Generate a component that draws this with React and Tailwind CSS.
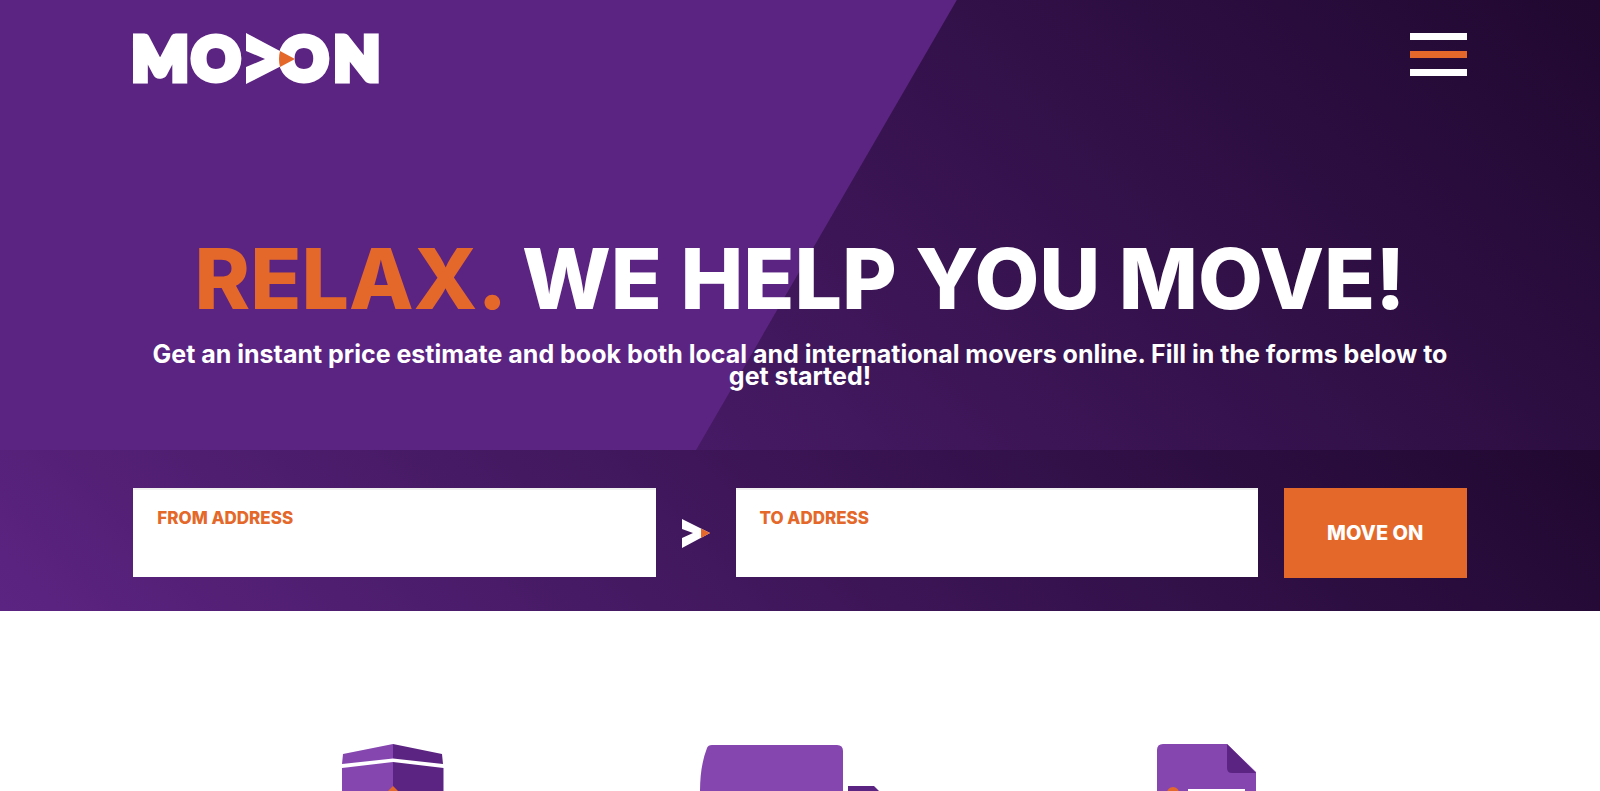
import { useState } from "react";

const Logo = () => (
  <svg
    className="-ml-1 h-[88px] w-[260px] font-['Lato',sans-serif] font-black"
    viewBox="-4 -17 260 88"
    role="img"
    aria-label="MoveOn"
  >
    <g fill="#fff" stroke="#fff" strokeWidth="7" strokeLinejoin="miter" fontSize="59">
      <text x="-1" y="47">M</text>
      <text x="59" y="47">O</text>
      <text x="147" y="47">O</text>
      <text x="201" y="47">N</text>
    </g>
    <path d="M113 0 L162 26 L113 51 V34 L132 26 L113 18 Z" fill="#fff" />
    <path d="M147 18 L162 26 L147 34 Q145 26 147 18 Z" fill="#e4682a" />
  </svg>
);

const Arrow = () => (
  <svg className="h-[29px] w-7 shrink-0 self-center" viewBox="0 0 28 29" aria-hidden="true">
    <path d="M0 0 L28 14 L0 29 V19 L11 14 L0 10 Z" fill="#fff" />
    <path d="M19 9.500 L28 14 L19 19 Z" fill="#e4682a" />
  </svg>
);

const BoxIcon = () => (
  <svg className="h-[47px] w-[102px]" viewBox="0 0 102 47" aria-hidden="true">
    <path d="M1 10 L51 0 V14.500 L0 20 Z M0 24 L51 18 V47 H0 Z" fill="#8546b0" />
    <path d="M51 0 L100 10 L101 20 L51 14.500 Z M51 18 L101.500 24 V47 H51 Z" fill="#5c2482" />
    <path d="M51 42 L56 47 H46 Z" fill="#e4682a" />
  </svg>
);

const TruckIcon = () => (
  <svg className="h-[47px] w-[200px]" viewBox="0 0 200 47" aria-hidden="true">
    <path d="M12 1 H137 Q143 1 143 7 V47 H0 Q0 22 7 4 Q8 1 12 1 Z" fill="#8546b0" />
    <path d="M148 42 H174 L179 47 H148 Z" fill="#5c2482" />
  </svg>
);

const DocumentIcon = () => (
  <svg className="h-[47px] w-[99px]" viewBox="0 0 99 47" aria-hidden="true">
    <path d="M6 0 H70 L99 28 V47 H0 V6 Q0 0 6 0 Z" fill="#8546b0" />
    <path d="M70 0 L99 29 H75 Q70 29 70 24 Z" fill="#5c2482" />
    <circle cx="16" cy="49" r="6" fill="#e4682a" />
    <path d="M31 45 H88 V47 H31 Z" fill="#fff" />
  </svg>
);

const AddressField = ({ id, label, value, onChange }) => (
  <div className="flex h-[89px] flex-1 flex-col border-t-2 border-[#f0f0f0] bg-white px-6 pt-[18px]">
    <label htmlFor={id} className="text-[17px] leading-5 font-extrabold text-[#e4682a] uppercase">
      {label}
    </label>
    <input
      id={id}
      type="text"
      className="h-10 w-full bg-white text-lg text-[#5c2482] outline-none"
      value={value}
      onChange={(e) => onChange(e.target.value)}
    />
  </div>
);

const App = () => {
  const [from, setFrom] = useState("");
  const [to, setTo] = useState("");

  return (
    <div className="bg-white font-['Inter',sans-serif]">
      <div className="relative isolate bg-[#5c2482] pb-[63px]">
        <div className="absolute inset-0 -z-10 bg-linear-45 from-[#5c2482] to-[#200830] [clip-path:polygon(59.8%_0,100%_0,100%_100%,43.5%_100%)]" />
        <header className="mx-auto flex w-10/12 items-start justify-between pt-4">
          <a href="#">
            <Logo />
          </a>
          <button type="button" aria-label="Menu" className="mt-[17px] flex w-[57px] flex-col gap-[11px]">
            <span className="h-[7px] bg-white" />
            <span className="h-[7px] bg-[#e4682a]" />
            <span className="h-[7px] bg-white" />
          </button>
        </header>
        <div className="mx-auto w-10/12 pt-[125px] text-center font-bold text-white">
          <h1 className="text-[84px] leading-[100px] font-extrabold whitespace-nowrap uppercase">
            <span className="text-[#e4682a]">Relax.</span> We help you move!
          </h1>
          <p className="pt-[14px] text-[25px] leading-[22px]">
            Get an instant price estimate and book both local and international movers online. Fill in the forms below to get started!
          </p>
        </div>
      </div>

      <div className="bg-linear-45 from-[#5c2482] to-[#200830]">
        <form
          className="mx-auto flex w-10/12 items-start gap-[26px] pt-[38px] pb-[33px]"
          onSubmit={(e) => e.preventDefault()}
        >
          <AddressField id="from" label="From address" value={from} onChange={setFrom} />
          <Arrow />
          <AddressField id="to" label="To address" value={to} onChange={setTo} />
          <button
            type="submit"
            className="h-[90px] w-[183px] bg-[#e4682a] text-xl font-extrabold text-white uppercase"
          >
            Move on
          </button>
        </form>
      </div>

      <section className="mx-auto grid max-w-[1220px] grid-cols-3 justify-items-center pt-[133px]">
        <BoxIcon />
        <TruckIcon />
        <DocumentIcon />
      </section>
    </div>
  );
};

export default App;
